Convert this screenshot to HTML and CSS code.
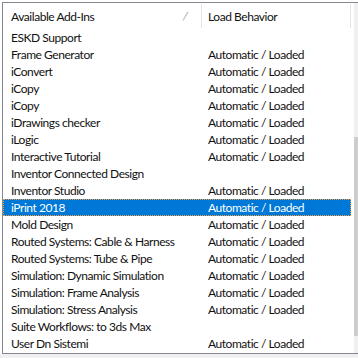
FILE: index.html
```html
<!DOCTYPE html>
<html lang="en">
<head>
    <meta charset="UTF-8">
    <meta name="viewport" content="width=device-width, initial-scale=1.0">
    <link rel="stylesheet" href="styles.css">
    <title>Add-In Manager</title>
</head>
<body>
    <div class="frame">
        <div class="list">
            <div class="header">
                <div class="col name">Available Add-Ins <span class="sort">/</span></div>
                <div class="col behavior">Load Behavior</div>
            </div>
            <div class="row"><div class="col name">ESKD Support</div><div class="col behavior"></div></div>
            <div class="row"><div class="col name">Frame Generator</div><div class="col behavior">Automatic / Loaded</div></div>
            <div class="row"><div class="col name">iConvert</div><div class="col behavior">Automatic / Loaded</div></div>
            <div class="row"><div class="col name">iCopy</div><div class="col behavior">Automatic / Loaded</div></div>
            <div class="row"><div class="col name">iCopy</div><div class="col behavior">Automatic / Loaded</div></div>
            <div class="row"><div class="col name">iDrawings checker</div><div class="col behavior">Automatic / Loaded</div></div>
            <div class="row"><div class="col name">iLogic</div><div class="col behavior">Automatic / Loaded</div></div>
            <div class="row"><div class="col name">Interactive Tutorial</div><div class="col behavior">Automatic / Loaded</div></div>
            <div class="row"><div class="col name">Inventor Connected Design</div><div class="col behavior"></div></div>
            <div class="row"><div class="col name">Inventor Studio</div><div class="col behavior">Automatic / Loaded</div></div>
            <div class="row selected"><div class="col name">iPrint 2018</div><div class="col behavior">Automatic / Loaded</div></div>
            <div class="row"><div class="col name">Mold Design</div><div class="col behavior">Automatic / Loaded</div></div>
            <div class="row"><div class="col name">Routed Systems: Cable &amp; Harness</div><div class="col behavior">Automatic / Loaded</div></div>
            <div class="row"><div class="col name">Routed Systems: Tube &amp; Pipe</div><div class="col behavior">Automatic / Loaded</div></div>
            <div class="row"><div class="col name">Simulation: Dynamic Simulation</div><div class="col behavior">Automatic / Loaded</div></div>
            <div class="row"><div class="col name">Simulation: Frame Analysis</div><div class="col behavior">Automatic / Loaded</div></div>
            <div class="row"><div class="col name">Simulation: Stress Analysis</div><div class="col behavior">Automatic / Loaded</div></div>
            <div class="row"><div class="col name">Suite Workflows: to 3ds Max</div><div class="col behavior"></div></div>
            <div class="row"><div class="col name">User Dn Sistemi</div><div class="col behavior">Automatic / Loaded</div></div>
        </div>
        <div class="scrollbar">
            <div class="thumb"></div>
        </div>
    </div>
</body>
</html>
```
FILE: styles.css
```css
html, body {
    margin: 0;
    padding: 0;
    width: 358px;
    height: 358px;
    overflow: hidden;
    font-family: "Segoe UI", Lato, sans-serif;
    font-size: 12px;
    letter-spacing: -0.45px;
    color: #111;
}

body {
    padding-top: 2px;
    box-sizing: border-box;
    background: linear-gradient(#fff 0, #fff 354px, #f0f0f0 354px);
}

.frame {
    margin-left: 2px;
    width: 356px;
    height: 352px;
    box-sizing: border-box;
    border: 1px solid #828790;
    border-right: 0;
    background: #fff;
    display: flex;
}

.list {
    width: 348px;
    display: flex;
    flex-direction: column;
}

.header {
    display: flex;
    height: 26px;
    align-items: stretch;
}

.row {
    display: flex;
    height: 17px;
    align-items: center;
    white-space: nowrap;
}

.col {
    display: flex;
    align-items: center;
    box-sizing: border-box;
}

.col.name {
    width: 199px;
    padding-left: 8px;
}

.col.behavior {
    width: 149px;
    padding-left: 6px;
}

.header .col {
    margin-top: 1px;
    margin-bottom: 1px;
}

.header .col.name {
    position: relative;
    border-right: 1px solid #e5e5e5;
}

.header .col.behavior {
    border-right: 1px solid #e5e5e5;
}

.sort {
    position: absolute;
    left: 180px;
    top: 5px;
    color: #9a9a9a;
    font-size: 11px;
    transform: skewX(-10deg);
}

.row.selected {
    background: #0078d7;
    color: #fff;
    outline: 1px dotted #f39a3a;
    outline-offset: -1px;
}

.scrollbar {
    margin-left: 3px;
    width: 5px;
    background: #f0f0f0;
    display: flex;
    flex-direction: column;
}

.thumb {
    margin-top: 134px;
    height: 199px;
    background: #cdcdcd;
}
```
